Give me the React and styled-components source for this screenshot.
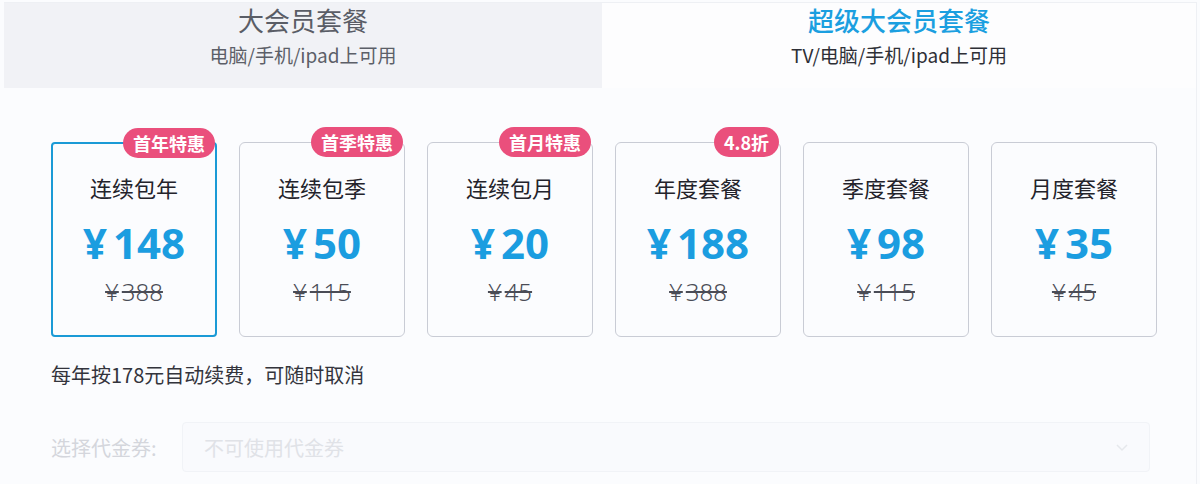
import React from "react";
import styled, { createGlobalStyle } from "styled-components";

const Global = createGlobalStyle`
  html, body { margin: 0; padding: 0; background: #fbfcfe; }
  body { font-family: "Noto Sans CJK SC", "Noto Sans", sans-serif; }
`;

const Page = styled.div`
  width: 1200px;
  height: 484px;
  box-sizing: border-box;
  padding: 2px 3px 0 4px;
  overflow: hidden;
  background: #fbfcfe;
`;

const Frame = styled.div`
  border-top: 1px solid #eef0f4;
  border-right: 1px solid #eef0f4;
  height: 100%;
  box-sizing: border-box;
`;

const Tabs = styled.div`
  display: grid;
  grid-template-columns: 598px 1fr;
  height: 85px;
`;

const Tab = styled.div`
  display: flex;
  flex-direction: column;
  align-items: center;
  background: ${(p) => (p.$active ? "#fdfdfe" : "#f1f2f6")};
`;

const TabTitle = styled.div`
  font-size: 26px;
  line-height: 34px;
  color: ${(p) => (p.$active ? "#1b9fe0" : "#5a5d66")};
  font-weight: ${(p) => (p.$active ? 500 : 400)};
`;

const TabSub = styled.div`
  margin-top: 4px;
  font-size: 19px;
  line-height: 28px;
  color: ${(p) => (p.$active ? "#2e2f36" : "#5c5f68")};
`;

const Body = styled.div`
  padding: 54px 0 0 47px;
`;

const Cards = styled.div`
  display: flex;
  gap: 22px;
`;

const Card = styled.div`
  position: relative;
  width: 166px;
  height: 195px;
  box-sizing: border-box;
  border: ${(p) => (p.$selected ? "2px solid #1a9ad6" : "1px solid #c9ccd5")};
  border-radius: ${(p) => (p.$selected ? "4px" : "6px")};
  background: #fbfcfe;
  display: flex;
  flex-direction: column;
  align-items: center;
  padding-top: ${(p) => (p.$selected ? "27px" : "28px")};
`;

const Badge = styled.div`
  position: absolute;
  top: -16px;
  right: ${(p) => (p.$selected ? "0px" : "1px")};
  height: 30px;
  padding: 0 10px;
  border-radius: 15px;
  background: #ea4f7c;
  color: #fff;
  font-size: 18px;
  font-weight: 700;
  line-height: 30px;
  white-space: nowrap;
`;

const Name = styled.div`
  font-size: 22px;
  line-height: 32px;
  color: #23232b;
`;

const Price = styled.div`
  margin-top: 15px;
  font-family: "Open Sans", "Noto Sans", sans-serif;
  font-size: 42px;
  font-weight: 700;
  line-height: 50px;
  color: #1b9de0;
`;

const Yen = styled.span`
  margin-right: 6px;
`;

const Orig = styled.div`
  margin-top: 9px;
  font-family: "Noto Sans", "Noto Sans CJK SC", sans-serif;
  font-size: 24px;
  font-weight: 300;
  line-height: 30px;
  color: #4a4c56;
  text-decoration: line-through;
  text-decoration-thickness: 1.5px;
`;

const OrigYen = styled.span`
  margin-right: 3px;
`;

const Note = styled.div`
  margin-top: 24px;
  font-size: 20px;
  line-height: 28px;
  color: #33343c;
`;

const CouponRow = styled.div`
  margin-top: 33px;
  display: flex;
  align-items: center;
`;

const CouponLabel = styled.div`
  width: 131px;
  font-size: 20px;
  color: #d4d6dc;
`;

const Select = styled.div`
  width: 968px;
  height: 50px;
  box-sizing: border-box;
  border: 1px solid #f1f3f7;
  border-radius: 4px;
  background: #f9fafd;
  display: flex;
  align-items: center;
  justify-content: space-between;
  padding: 0 20px 0 21px;
`;

const Placeholder = styled.div`
  font-size: 20px;
  color: #e0e2e7;
`;

const plans = [
  { name: "连续包年", price: 148, orig: 388, badge: "首年特惠", selected: true },
  { name: "连续包季", price: 50, orig: 115, badge: "首季特惠" },
  { name: "连续包月", price: 20, orig: 45, badge: "首月特惠" },
  { name: "年度套餐", price: 188, orig: 388, badge: "4.8折" },
  { name: "季度套餐", price: 98, orig: 115 },
  { name: "月度套餐", price: 35, orig: 45 },
];

export default function App() {
  return (
    <>
      <Global />
      <Page>
        <Frame>
          <Tabs>
            <Tab>
              <TabTitle>大会员套餐</TabTitle>
              <TabSub>电脑/手机/ipad上可用</TabSub>
            </Tab>
            <Tab $active>
              <TabTitle $active>超级大会员套餐</TabTitle>
              <TabSub $active>TV/电脑/手机/ipad上可用</TabSub>
            </Tab>
          </Tabs>
          <Body>
            <Cards>
              {plans.map((p) => (
                <Card key={p.name} $selected={p.selected}>
                  {p.badge && <Badge $selected={p.selected}>{p.badge}</Badge>}
                  <Name>{p.name}</Name>
                  <Price>
                    <Yen>¥</Yen>
                    {p.price}
                  </Price>
                  <Orig>
                    <OrigYen>¥</OrigYen>
                    {p.orig}
                  </Orig>
                </Card>
              ))}
            </Cards>
            <Note>每年按178元自动续费，可随时取消</Note>
            <CouponRow>
              <CouponLabel>选择代金券:</CouponLabel>
              <Select>
                <Placeholder>不可使用代金券</Placeholder>
                <svg width="14" height="10" viewBox="0 0 14 10">
                  <path d="M2 3 L7 8 L12 3" fill="none" stroke="#e6e8ec" strokeWidth="1.5" />
                </svg>
              </Select>
            </CouponRow>
          </Body>
        </Frame>
      </Page>
    </>
  );
}
